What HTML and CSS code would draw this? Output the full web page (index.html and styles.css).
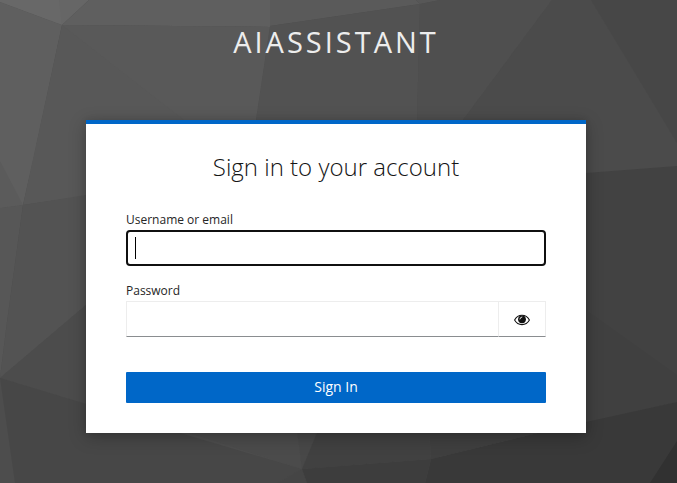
FILE: index.html
```
<!DOCTYPE html>
<html lang="en">
<head>
<meta charset="utf-8">
<title>Sign in to AIAssistant</title>
<link rel="stylesheet" href="styles.css">
</head>
<body>
<svg class="backdrop" viewBox="0 0 677 483" preserveAspectRatio="none" aria-hidden="true">
  <rect width="677" height="483" fill="#4d4d4d"/>
  <path fill="#666" d="M0 0H89L62 25L0 2z"/>
  <path fill="#686868" d="M0 0H59L62 25L0 2z"/>
  <path fill="#5f5f5f" d="M0 2L62 25L33 161L23 205L0 208z"/>
  <path fill="#5b5b5b" d="M0 161L23 205L0 208z"/>
  <path fill="#5f5f5f" d="M89 0H270V27L62 25z"/>
  <path fill="#5a5a5a" d="M270 0H416L420 4L270 26z"/>
  <path fill="#585858" d="M62 25L270 27L256 120L86 196L23 205z"/>
  <path fill="#595959" d="M62 25L270 27L256 120H184z"/>
  <path fill="#525252" d="M270 26L420 4L417 120H256z"/>
  <path fill="#575757" d="M416 0H440L420 4z"/>
  <path fill="#4f4f4f" d="M440 0H552L463 120H417L420 4z"/>
  <path fill="#4b4b4b" d="M552 0H591L677 143V166L586 173L463 120z"/>
  <path fill="#474747" d="M591 0H677V143z"/>
  <path fill="#424242" d="M586 173L677 166V402L586 423z"/>
  <path fill="#404040" d="M586 310L677 375V402L586 423z"/>
  <path fill="#575757" d="M0 208L23 205L7 322L0 378z"/>
  <path fill="#535353" d="M23 205L86 195V305L0 378L7 322z"/>
  <path fill="#4c4c4c" d="M0 378L86 305V404z"/>
  <path fill="#474747" d="M0 378L86 404L180 433L302 469L277 483H0z"/>
  <path fill="#4d4d4d" d="M0 378L15 483H0z"/>
  <path fill="#4b4b4b" d="M180 430H297L302 469z"/>
  <path fill="#484848" d="M297 430H318L302 469z"/>
  <path fill="#414141" d="M318 430H429L431 459L302 469z"/>
  <path fill="#3f3f3f" d="M429 430H550L431 459z"/>
  <path fill="#454545" d="M302 469L307 483H277z"/>
  <path fill="#3d3d3d" d="M302 469L431 459L425 483H307z"/>
  <path fill="#393939" d="M431 459L550 430L677 402V483H425z"/>
  <path fill="#313131" d="M677 441V483H650z"/>
</svg>
<div class="page">
  <header class="brand">AIASSISTANT</header>
  <main class="card">
    <h1 class="card-title">Sign in to your account</h1>
    <form class="form">
      <label class="label" for="username">Username or email</label>
      <div class="input" id="username"><span class="caret"></span></div>
      <label class="label" for="password">Password</label>
      <div class="input-group">
        <input class="password" id="password" type="password">
        <button class="reveal" type="button" aria-label="Show password">
          <svg class="eye" viewBox="0 0 16 12">
            <path d="M.6 6C2.200 3.100 4.700 1.300 8 1.300S13.800 3.100 15.400 6C13.800 8.900 11.300 10.600 8 10.600S2.200 8.900.6 6z" fill="#fff" stroke="#111" stroke-width="1.100"/>
            <circle cx="8" cy="5.300" r="3.900" fill="#111"/>
            <path d="M5.900 5A2.200 2.200 0 0 1 7.900 3" fill="none" stroke="#fff" stroke-width=".9" stroke-linecap="round"/>
          </svg>
        </button>
      </div>
      <button class="submit" type="button">Sign In</button>
    </form>
  </main>
</div>
</body>
</html>
```
FILE: styles.css
```
* {
  box-sizing: border-box;
}

body {
  margin: 0;
  height: 483px;
  overflow: hidden;
  background: #4d4d4d;
  color: #151515;
  font-family: "Open Sans", sans-serif;
}

.backdrop {
  position: absolute;
  inset: 0;
  width: 100%;
  height: 100%;
}

.page {
  position: relative;
  display: flex;
  flex-direction: column;
  align-items: center;
}

.brand {
  height: 120px;
  padding: 22px 5px 0 0;
  color: #ededed;
  font-size: 29px;
  line-height: 40px;
  letter-spacing: 3px;
}

.card {
  width: 500px;
  height: 313px;
  margin-right: 5px;
  padding: 27px 40px 30px;
  border-top: 4px solid #0067c8;
  background: #fff;
  box-shadow: 0 4px 16px rgba(3, 3, 3, .25), 0 0 6px rgba(3, 3, 3, .1);
}

.card-title {
  margin: 0 0 44px;
  font-size: 24px;
  font-weight: 300;
  line-height: 31px;
  text-align: center;
}

.form {
  display: flex;
  flex-direction: column;
}

.label {
  height: 18px;
  margin-top: -15px;
  margin-bottom: 1px;
  color: #262626;
  font-size: 12px;
  line-height: 18px;
}

.input {
  height: 36px;
  margin-bottom: 31px;
  padding: 5px 7px;
  border: 2px solid #101010;
  border-radius: 4px;
}

.caret {
  display: block;
  width: 1px;
  height: 22px;
  background: #000;
}

.input-group {
  display: flex;
  height: 36px;
  margin-bottom: 35px;
}

.password {
  width: 372px;
  padding: 0 8px;
  border: 1px solid #ededed;
  border-right: 0;
  border-bottom-color: #8a8d90;
  outline: 0;
}

.reveal {
  display: flex;
  flex: 1;
  align-items: center;
  justify-content: center;
  padding: 2px 0 0;
  border: 1px solid #ededed;
  border-bottom-color: #8a8d90;
  background: #fff;
}

.eye {
  width: 16px;
  height: 12px;
}

.submit {
  height: 31px;
  padding: 0 0 2px;
  border: 0;
  border-radius: 1px;
  background: #0067c8;
  color: #fff;
  font: 14px/29px "Open Sans", sans-serif;
}
```
